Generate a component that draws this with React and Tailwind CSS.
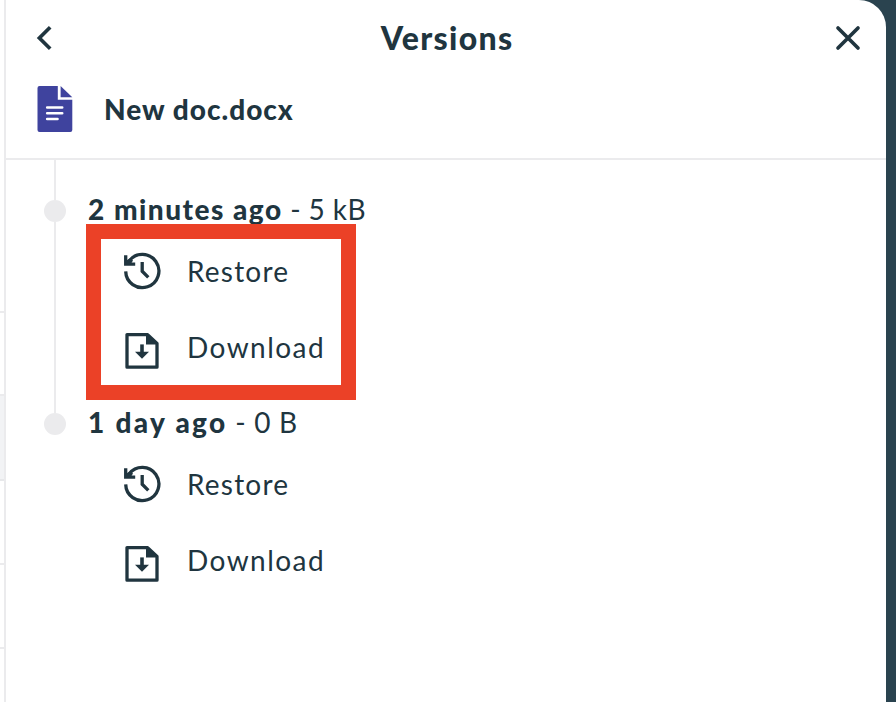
import React from "react";

function HistoryIcon() {
  return (
    <svg className="h-10 w-10 shrink-0" viewBox="0 0 40 40" fill="none" stroke="currentColor" strokeWidth="3.3">
      <path d="M3.7 20.4A16.6 16.6 0 1 0 7.2 9.8" />
      <path d="M3.7 4.2V13.1H13.2" />
      <path d="M3.9 9.5V13.5H8.5L11 9.5L8.3 7.4Z" fill="currentColor" stroke="none" />
      <path d="M20.2 11V20.2L26.3 26.4" />
    </svg>
  );
}

function FileDownloadIcon() {
  return (
    <svg className="h-10 w-10 shrink-0" viewBox="0 0 40 40" fill="none" stroke="currentColor" strokeWidth="3.3">
      <path d="M5 3.6H25.6L35 12.5V36.2H5Z" strokeLinejoin="round" />
      <path d="M24 3L36 13.6H24Z" fill="currentColor" stroke="none" />
      <path d="M20 13.4V22" strokeWidth="3.6" />
      <path d="M13 20.7H27L20 27.8Z" fill="currentColor" stroke="none" />
    </svg>
  );
}

function DocumentIcon() {
  return (
    <svg className="h-[46px] w-9 shrink-0" viewBox="0 0 36 46">
      <path fill="#3f439e" d="M2.5 0H20.8V13.7H35.3V44Q35.3 46 33.3 46H2.5Q.5 46 .5 44V2Q.5 0 2.5 0Z" />
      <path fill="#3f439e" d="M23.6 0L35.3 11.3H23.6Z" />
      <path d="M10.2 21.5H25.2M10.2 27.2H25.2M10.2 33H20.5" fill="none" stroke="white" strokeWidth="2.6" strokeLinecap="round" />
    </svg>
  );
}

function Version({ age, size, ageClass, sizeClass }) {
  return (
    <li className="h-[212.5px]">
      <div className="flex h-8 items-center whitespace-pre">
        <span className={`font-black ${ageClass}`}>{age}</span>
        <span className={sizeClass}>{size}</span>
      </div>
      <button className="ml-[34px] mt-[26px] flex h-10 items-center">
        <HistoryIcon />
        <span className="ml-[25px] tracking-[1.2px]">Restore</span>
      </button>
      <button className="ml-[34px] mt-10 flex h-10 items-center">
        <FileDownloadIcon />
        <span className="-mt-[8px] ml-[25px] tracking-[1.45px]">Download</span>
      </button>
    </li>
  );
}

export default function App() {
  return (
    <div className="flex h-[702px] w-[896px] overflow-hidden bg-[#2a434f] font-['Lato',sans-serif] text-[28px] leading-8 text-[#20353f]">
      <div className="flex w-[886px] overflow-hidden rounded-tr-[27px] bg-white">
        <aside className="w-1 shrink-0">
          <div className="h-[313px] border-b-2 border-[#ebebed]" />
          <div className="h-[83px] border-b-2 border-[#ebebed]" />
          <div className="h-[85px] border-b-2 border-[#e7e8ea] bg-[#f2f3f5]" />
          <div className="h-[84px] border-b-2 border-[#ebebed]" />
          <div className="h-[84px] border-b-2 border-[#ebebed]" />
        </aside>
        <main className="flex min-w-0 flex-1 flex-col border-l-2 border-[#ebebed]">
          <header className="h-[160px] shrink-0 border-b-2 border-[#ebebed]">
            <div className="flex h-[76px] items-center justify-between pl-[30px] pr-6">
              <svg className="h-7 w-7" viewBox="0 0 28 28" fill="none" stroke="currentColor" strokeWidth="3.7" strokeLinecap="butt">
                <path d="M14.2 3.2L3.4 14L14.2 24.8" />
              </svg>
              <h1 className="-ml-1 text-[32px] font-black tracking-[1.3px]">Versions</h1>
              <svg className="h-7 w-7" viewBox="0 0 28 28" fill="none" stroke="currentColor" strokeWidth="3.7" strokeLinecap="round">
                <path d="M4 4L24 24M24 4L4 24" />
              </svg>
            </div>
            <div className="flex items-center pl-[31px] pt-[10px]">
              <DocumentIcon />
              <h2 className="-mt-px ml-[31px] font-black tracking-[1px]">New doc.docx</h2>
            </div>
          </header>
          <div className="flex">
            <div className="ml-[38px] flex w-[22px] flex-col items-center">
              <div className="h-10 w-0.5 bg-[#ebebed]" />
              <div className="h-[22px] w-[22px] rounded-full bg-[#ebebed]" />
              <div className="h-[191px] w-0.5 bg-[#ebebed]" />
              <div className="h-[22px] w-[22px] rounded-full bg-[#ebebed]" />
            </div>
            <ul className="relative ml-[22px] pt-[33px]">
              <Version age="2 minutes ago" size=" - 5 kB" ageClass="tracking-[1.5px]" sizeClass="tracking-[0.4px]" />
              <Version age="1 day ago" size=" - 0 B" ageClass="tracking-[2.3px]" sizeClass="tracking-[0.7px]" />
              <div className="absolute -left-[1.6px] top-[64.4px] h-[176px] w-[270px] border-[15px] border-[#eb4127]" />
            </ul>
          </div>
        </main>
      </div>
    </div>
  );
}
